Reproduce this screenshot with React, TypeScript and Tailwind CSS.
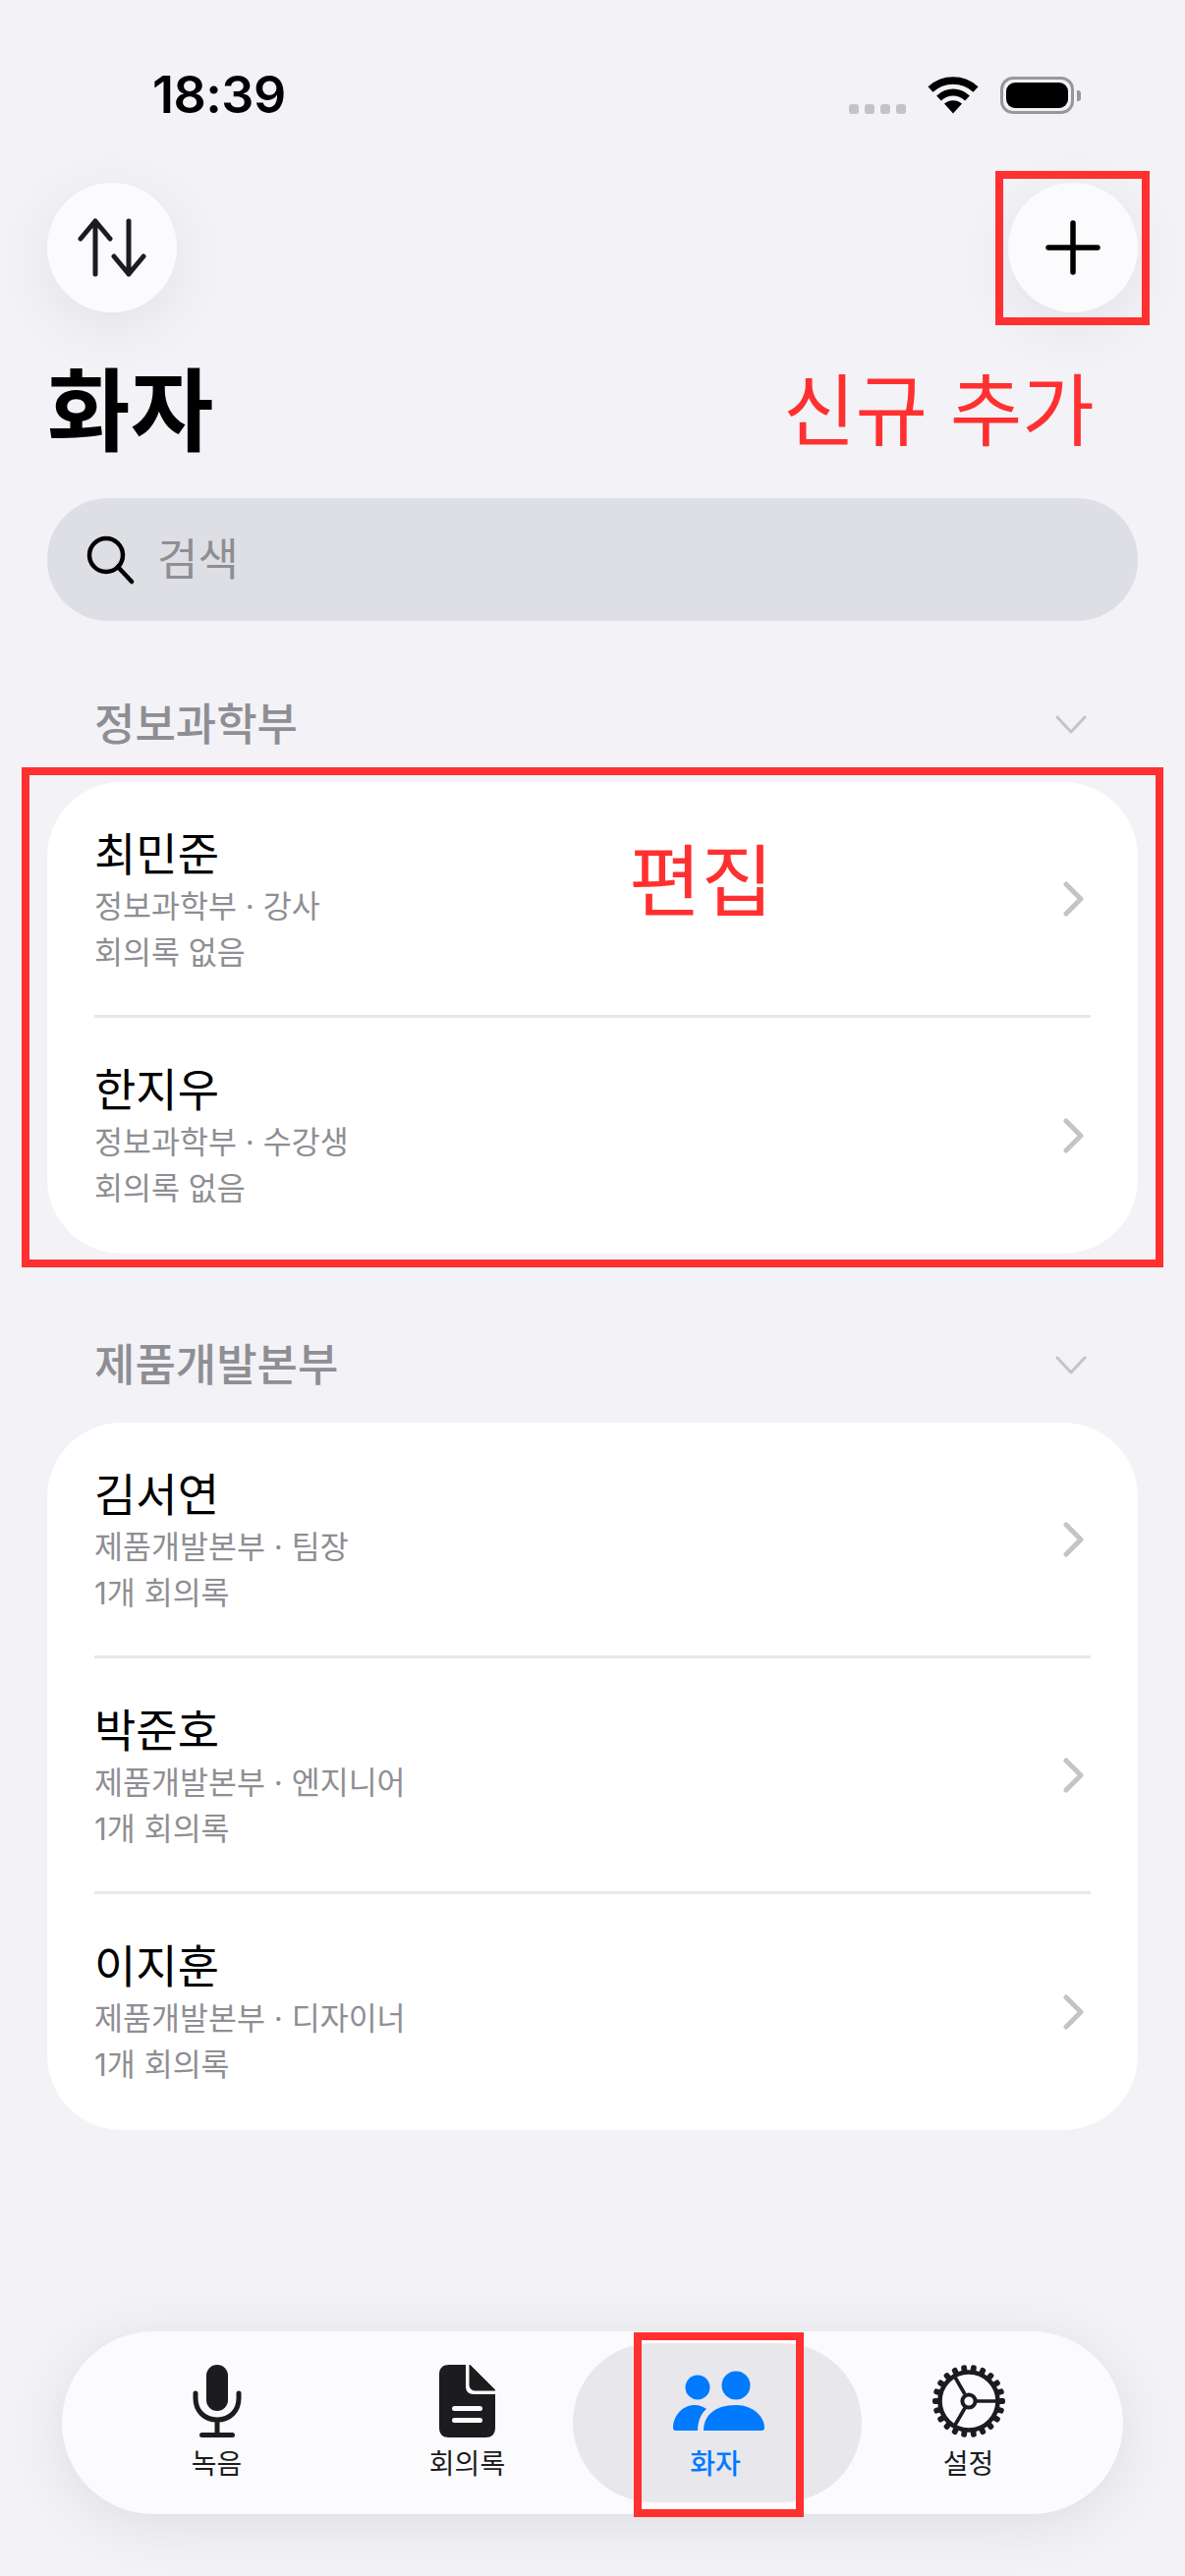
import type { ReactNode } from "react"

const KR = "font-['Inter','Noto_Sans_CJK_KR','Noto_Sans',sans-serif]"

function Wifi() {
  return (
    <svg width="52" height="38" viewBox="0 0 52 38" fill="none">
      <path d="M3 13 C16 1 36 1 49 13" stroke="#000" strokeWidth="7.5" />
      <path d="M11.5 22 C20 14 32 14 40.5 22" stroke="#000" strokeWidth="7" />
      <path d="M17 27.5 C22 23 30 23 35 27.5 L26 37.5 Z" fill="#000" />
    </svg>
  )
}

function StatusBar() {
  return (
    <div className="h-[186px] shrink-0 flex justify-between pl-[107px] pr-[58px] relative">
      <span className="font-['Inter',sans-serif] font-semibold text-[52px] leading-none mt-[71px] tracking-[-0.5px] text-black">18:39</span>
      <div className="flex items-start mt-[78px]">
        <div className="flex gap-[6px] mt-[28px]">
          <i className="w-[10px] h-[10px] rounded-[3px] bg-[#c4c4c8]" />
          <i className="w-[10px] h-[10px] rounded-[3px] bg-[#c4c4c8]" />
          <i className="w-[10px] h-[10px] rounded-[3px] bg-[#c4c4c8]" />
          <i className="w-[10px] h-[10px] rounded-[3px] bg-[#c4c4c8]" />
        </div>
        <div className="ml-[22px]"><Wifi /></div>
        <div className="ml-[22px] w-[75px] h-[38px] rounded-[13px] border-[3px] border-[#98989c] p-[3px]">
          <div className="w-full h-full bg-black rounded-[9px]" />
        </div>
        <div className="ml-[3px] mt-[14px] w-[4px] h-[11px] bg-[#98989c] rounded-r-[3px]" />
      </div>
    </div>
  )
}

function RoundButton({ children }: { children: ReactNode }) {
  return (
    <button className="w-[132px] h-[132px] rounded-full bg-[#fbfbfe] flex items-center justify-center shadow-[0_14px_60px_rgba(0,0,0,0.07)]">
      {children}
    </button>
  )
}

function Chevron() {
  return (
    <svg width="22" height="36" viewBox="0 0 22 36" fill="none" className="shrink-0 mr-[6px]">
      <path d="M3 3 L18 18 L3 33" stroke="#c4c4c6" strokeWidth="5" strokeLinecap="round" strokeLinejoin="round" />
    </svg>
  )
}

type Person = { name: string; role: string; notes: string }

function SectionHeader({ title }: { title: string }) {
  return (
    <div className="h-[164px] pt-[51px] pl-[48px] pr-[52px] flex items-start justify-between shrink-0">
      <span className={`${KR} font-medium text-[45px] leading-[110px] h-[110px] text-[#8e8e93]`}>{title}</span>
      <svg width="32" height="20" viewBox="0 0 32 20" fill="none" className="mt-[45px]">
        <path d="M2 2 L16 17 L30 2" stroke="#c4c4c8" strokeWidth="3" strokeLinecap="round" strokeLinejoin="round" />
      </svg>
    </div>
  )
}

function PersonRow({ person, last }: { person: Person; last: boolean }) {
  return (
    <div className={`h-[240px] mx-[48px] flex items-center justify-between ${last ? "" : "border-b-[3px] border-[#e8e8ea]"}`}>
      <div className="self-start pt-[44px]">
        <div className={`${KR} text-[46px] leading-[58px] text-black`}>{person.name}</div>
        <div className={`${KR} text-[31.5px] leading-[46px] mt-[2px] text-[#8e8e93]`}>{person.role}</div>
        <div className={`${KR} text-[31.5px] leading-[46px] mt-[1px] text-[#8e8e93]`}>{person.notes}</div>
      </div>
      <Chevron />
    </div>
  )
}

function Group({ title, people }: { title: string; people: Person[] }) {
  return (
    <>
      <SectionHeader title={title} />
      <div className="bg-white rounded-[76px] shrink-0">
        {people.map((p, i) => (
          <PersonRow key={p.name} person={p} last={i === people.length - 1} />
        ))}
      </div>
    </>
  )
}

function MicIcon() {
  return (
    <svg width="56" height="76" viewBox="0 0 56 76" fill="none">
      <rect x="17" y="1" width="22" height="47" rx="11" fill="#1c1c1e" />
      <path d="M6 30 V35 C6 48 15 57 28 57 C41 57 50 48 50 35 V30" stroke="#1c1c1e" strokeWidth="5" strokeLinecap="round" />
      <path d="M28 57 V71" stroke="#1c1c1e" strokeWidth="5" />
      <rect x="10" y="70" width="36" height="5" rx="2.5" fill="#1c1c1e" />
    </svg>
  )
}

function DocIcon() {
  return (
    <svg width="58" height="76" viewBox="0 0 58 76" fill="none">
      <path d="M10 1 H27 V23 C27 28 30 31 35 31 H57 V65 C57 72 53 75 47 75 H10 C4 75 0 72 0 65 V11 C0 4 4 1 10 1 Z" fill="#1c1c1e" />
      <path d="M31 1 L57 27 H37 C33 27 31 25 31 21 Z" fill="#1c1c1e" stroke="#1c1c1e" strokeWidth="1" strokeLinejoin="round" />
      <rect x="13" y="43" width="31" height="5" rx="2.5" fill="#fbfbfe" />
      <rect x="13" y="55" width="31" height="5" rx="2.5" fill="#fbfbfe" />
    </svg>
  )
}

function PeopleIcon() {
  return (
    <svg width="94" height="62" viewBox="0 0 94 62" fill="#007aff" className="ml-[3px]">
      <circle cx="25" cy="17" r="12.5" />
      <circle cx="64" cy="15" r="14.5" />
      <path d="M3 61 C0 61 0 59 0 57 C1 45 10 35 22 35 C27 35 31 37 34 39 C28 44 25 52 25 61 Z" />
      <path d="M31 61 C31 47 41 35 64 35 C82 35 93 47 93 58 C93 60 92 61 90 61 Z" />
    </svg>
  )
}

function GearIcon() {
  const teeth = Array.from({ length: 22 }, (_, i) => 90 + (i * 360) / 22)
  return (
    <svg width="76" height="76" viewBox="-38 -38 76 76" fill="none">
      {teeth.map((a) => (
        <rect key={a} x="-2.9" y="-37" width="5.8" height="9" rx="2.2" fill="#1c1c1e" transform={`rotate(${a})`} />
      ))}
      <circle r="29.5" stroke="#1c1c1e" strokeWidth="4.6" />
      <path d="M8 0 H28 M-4 -7 L-15 -26 M-4 7 L-15 26" stroke="#1c1c1e" strokeWidth="3.6" />
      <circle r="6.6" stroke="#1c1c1e" strokeWidth="4" />
    </svg>
  )
}

function Tab({ icon, label, active }: { icon: ReactNode; label: string; active?: boolean }) {
  return (
    <div className={`flex flex-col items-center pt-[21px] rounded-[81px] ${active ? "-ml-[20px] -mr-[19px] bg-[#e8e8ec]" : ""}`}>
      <div className="h-[76px] flex items-center justify-center">{icon}</div>
      <span className={`${KR} text-[28px] leading-[40px] mt-[6px] ${active ? "font-medium text-[#007aff] -ml-[4px]" : "text-[#1c1c1e]"}`}>{label}</span>
    </div>
  )
}

const info: Person[] = [
  { name: "최민준", role: "정보과학부 · 강사", notes: "회의록 없음" },
  { name: "한지우", role: "정보과학부 · 수강생", notes: "회의록 없음" },
]

const product: Person[] = [
  { name: "김서연", role: "제품개발본부 · 팀장", notes: "1개 회의록" },
  { name: "박준호", role: "제품개발본부 · 엔지니어", notes: "1개 회의록" },
  { name: "이지훈", role: "제품개발본부 · 디자이너", notes: "1개 회의록" },
]

export default function App() {
  return (
    <div className="relative w-[1206px] h-[2622px] overflow-hidden bg-[#f2f2f7] px-[48px] flex flex-col">
      <StatusBar />

      <div className="flex justify-between shrink-0">
        <RoundButton>
          <svg width="70" height="60" viewBox="0 0 70 60" fill="none" stroke="#1c1c1e" strokeWidth="5" strokeLinecap="round" strokeLinejoin="round">
            <path d="M18 57 V3 M3 21 L18 3 L33 21" />
            <path d="M52 3 V57 M37 39 L52 57 L67 39" />
          </svg>
        </RoundButton>
        <RoundButton>
          <svg width="56" height="56" viewBox="0 0 56 56" fill="none" stroke="#000" strokeWidth="5.5" strokeLinecap="round">
            <path d="M28 3 V53 M3 28 H53" />
          </svg>
        </RoundButton>
      </div>

      <div className="h-[189px] shrink-0 flex items-center">
        <h1 className={`${KR} font-bold text-[92px] leading-none mt-[12px] text-black`}>화자</h1>
      </div>

      <div className="h-[125px] shrink-0 rounded-[62px] bg-[#dedfe4] flex items-center pl-[40px]">
        <svg width="50" height="50" viewBox="0 0 50 50" fill="none" stroke="#000" strokeWidth="4.5" strokeLinecap="round">
          <circle cx="20" cy="20" r="17" />
          <path d="M32 32 L46 47" />
        </svg>
        <span className={`${KR} text-[45px] leading-none ml-[22px] text-[#8e8e93]`}>검색</span>
      </div>

      <Group title="정보과학부" people={info} />
      <div className="h-[8px] shrink-0" />
      <Group title="제품개발본부" people={product} />

      <div className="mt-auto mb-[63px] mx-[15px] h-[186px] shrink-0 rounded-[93px] bg-[#fbfbfe] px-[30px] py-[12px] grid grid-cols-4 shadow-[0_10px_60px_rgba(0,0,0,0.09)]">
        <Tab icon={<MicIcon />} label="녹음" />
        <Tab icon={<DocIcon />} label="회의록" />
        <Tab icon={<PeopleIcon />} label="화자" active />
        <Tab icon={<GearIcon />} label="설정" />
      </div>

      {/* red annotations drawn over the screenshot */}
      <div className="absolute left-[1013px] top-[174px] w-[157px] h-[157px] border-[8px] border-[#ff3030]" />
      <div className="absolute left-[22px] top-[781px] w-[1162px] h-[509px] border-[8px] border-[#ff3030]" />
      <div className="absolute left-[645px] top-[2374px] w-[173px] h-[188px] border-[8px] border-[#ff3030]" />
      <span className={`${KR} absolute left-[797px] top-[360px] text-[80px] leading-[116px] text-[#ff3030] whitespace-nowrap`}>신규 추가</span>
      <span className={`${KR} absolute left-[640px] top-[839px] text-[80px] leading-[116px] text-[#ff3030] whitespace-nowrap`}>편집</span>
    </div>
  )
}
